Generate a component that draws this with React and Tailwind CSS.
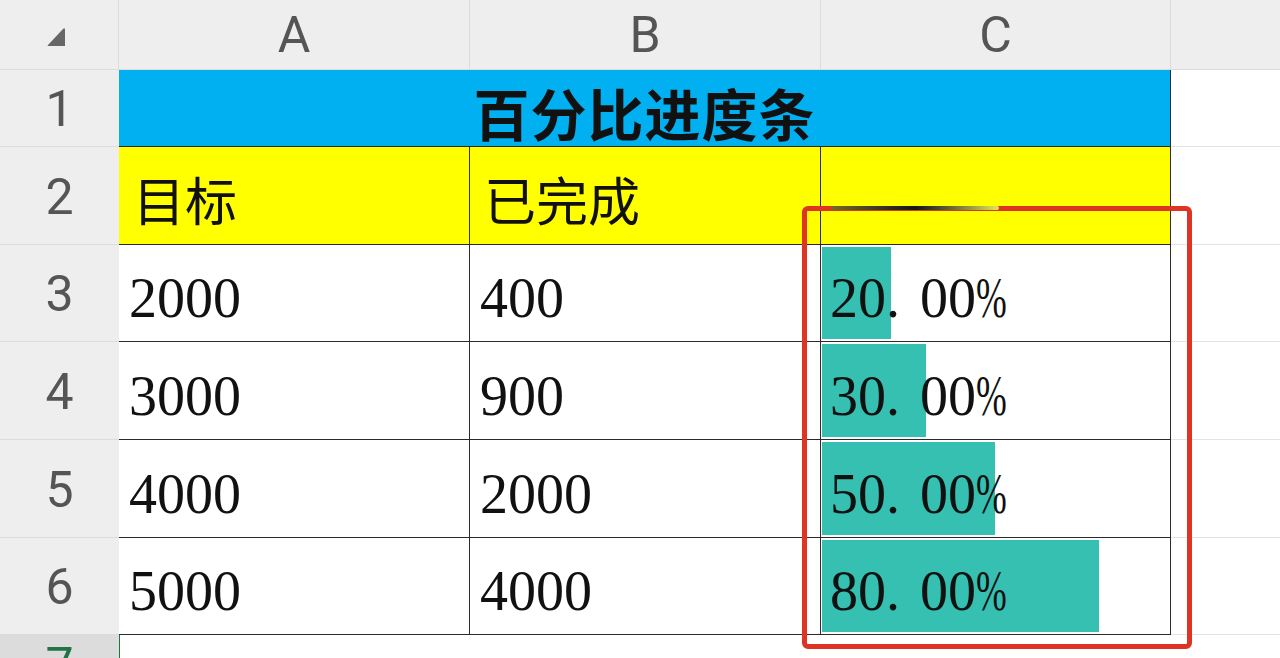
import React from 'react';

const serif = { fontFamily: '"Liberation Serif", "Noto Sans CJK SC", serif' };

const rows = [
  { n: 3, target: '2000', done: '400', pct: 20 },
  { n: 4, target: '3000', done: '900', pct: 30 },
  { n: 5, target: '4000', done: '2000', pct: 50 },
  { n: 6, target: '5000', done: '4000', pct: 80 },
];

const HeadCell = ({ children, className = '' }) => (
  <div
    className={`flex items-center justify-center bg-[#eeeeee] text-[#555555] text-[50px] leading-none font-['Roboto',sans-serif] ${className}`}
  >
    {children}
  </div>
);

const RowHead = ({ n }) => (
  <HeadCell className="border-b border-[#dcdcdc] pt-[2px]">{n}</HeadCell>
);

const Cell = ({ children, className = '' }) => (
  <div
    className={`flex items-center border-r border-b border-[#2a2a2a] bg-white pl-[10px] pt-[10px] text-[56px] leading-none text-[#111] font-['Liberation_Serif',serif] ${className}`}
  >
    {children}
  </div>
);

const Blank = ({ className = '' }) => (
  <div className={`border-b border-[#e3e3e3] bg-white ${className}`} />
);

export default function App() {
  return (
    <div className="relative h-[658px] w-[1280px] overflow-hidden bg-white">
      <div className="grid h-full grid-cols-[119px_351px_351px_350px_1fr] grid-rows-[70px_77px_98px_97px_98px_98px_97px_23px]">
        {/* column headers */}
        <HeadCell className="border-b border-r border-[#dcdcdc]">
          <svg width="24" height="24" viewBox="0 0 24 24" className="mt-[4px] ml-[-4px]">
            <path d="M20 3 L20 21 L3 21 Q2 21 3 20 L18 4 Q20 2 20 5 Z" fill="#666" />
          </svg>
        </HeadCell>
        <HeadCell className="border-b border-r border-[#dcdcdc]">A</HeadCell>
        <HeadCell className="border-b border-r border-[#dcdcdc]">B</HeadCell>
        <HeadCell className="border-b border-r border-[#dcdcdc]">C</HeadCell>
        <HeadCell className="border-b border-[#dcdcdc]" />

        {/* row 1 */}
        <RowHead n={1} />
        <div className="col-span-3 flex items-center justify-center border-r border-b border-[#2a2a2a] bg-[#00b0f0] pt-[8px]">
          <span className="text-[56px] font-bold leading-none tracking-[1px] text-[#111]" style={{ fontFamily: '"Noto Sans CJK SC", sans-serif' }}>
            百分比进度条
          </span>
        </div>
        <Blank />

        {/* row 2 */}
        <RowHead n={2} />
        <div className="flex items-center border-r border-b border-[#2a2a2a] bg-[#ffff00] pl-[14px] pt-[6px]">
          <span className="text-[52px] leading-none text-[#111]" style={{ fontFamily: '"Noto Sans CJK SC", sans-serif' }}>目标</span>
        </div>
        <div className="flex items-center border-r border-b border-[#2a2a2a] bg-[#ffff00] pl-[14px] pt-[6px]">
          <span className="text-[52px] leading-none text-[#111]" style={{ fontFamily: '"Noto Sans CJK SC", sans-serif' }}>已完成</span>
        </div>
        <div className="flex flex-col border-r border-b border-[#2a2a2a] bg-[#ffff00] pl-[10px] pt-[59px]">
          <div className="relative z-10 h-[4px] w-[168px] rounded-full bg-linear-to-r from-[#7a6a20] via-[#151515] to-[#e8e850]" />
        </div>
        <Blank />

        {rows.map((r) => (
          <React.Fragment key={r.n}>
            <RowHead n={r.n} />
            <Cell>{r.target}</Cell>
            <Cell>{r.done}</Cell>
            <div className="relative border-r border-b border-[#2a2a2a] bg-white py-[2px] pl-[1px] pr-[2px]">
              <div className="h-full bg-[#35c0b2]" style={{ width: `${r.pct}%` }} />
              <div className="absolute inset-0 flex items-center pl-[9px] pt-[10px] text-[56px] leading-none text-[#111]" style={serif}>
                {r.pct}.<span className="ml-[20px]">00</span>
                <span className="inline-block origin-left scale-x-[0.66]">%</span>
              </div>
            </div>
            <Blank />
          </React.Fragment>
        ))}

        {/* row 7 */}
        <div className="flex justify-center overflow-hidden bg-[#dcdcdc] pt-[6px] text-[50px] leading-none text-[#217346] font-['Roboto',sans-serif]">
          7
        </div>
        <div className="border-l border-[#217346] bg-white" />
        <div className="bg-white" />
        <div className="bg-white" />
        <div className="bg-white" />
      </div>

      {/* annotation box */}
      <div className="absolute left-[802px] top-[206px] h-[443px] w-[390px] rounded-[6px] border-[5px] border-[#de3423]" />
    </div>
  );
}
